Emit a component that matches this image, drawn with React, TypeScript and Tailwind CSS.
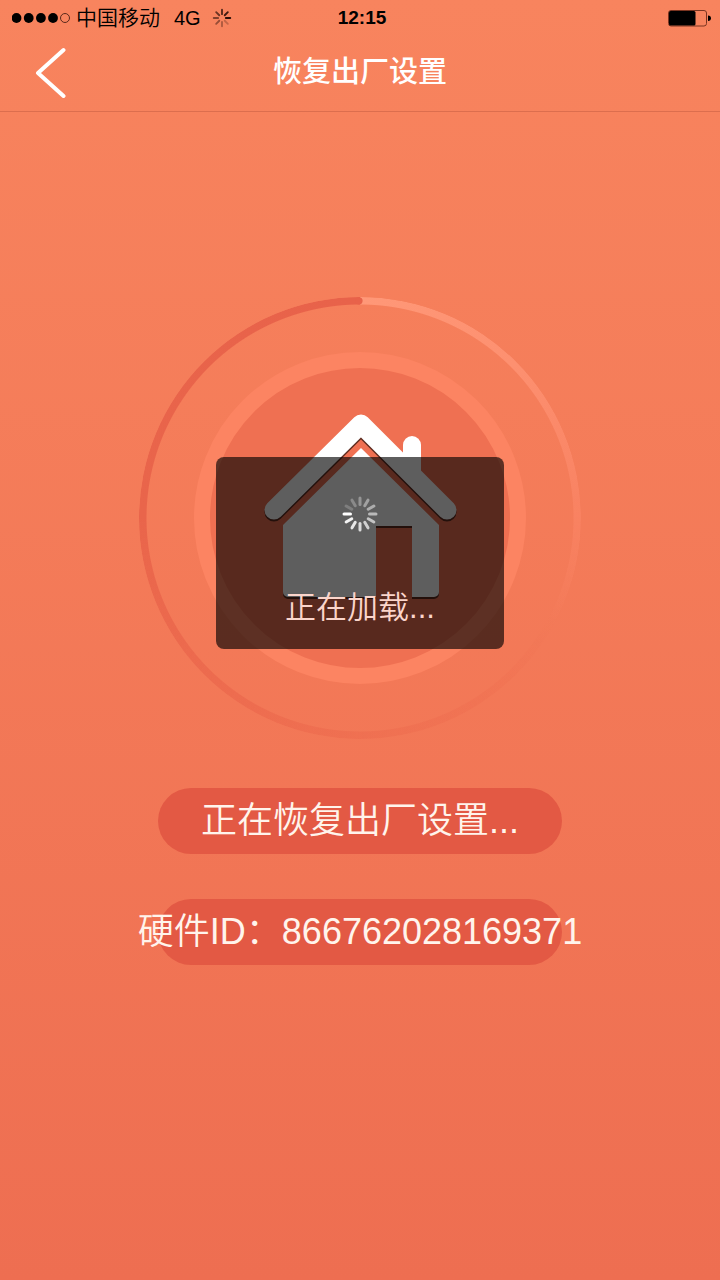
type SpinnerProps = {
  className: string;
  spokes: number;
  start: number;
  direction: 1 | -1;
  inner: number;
  outer: number;
  width: number;
  fade: number;
};

function Spinner({ className, spokes, start, direction, inner, outer, width, fade }: SpinnerProps) {
  const step = 360 / spokes;
  return (
    <svg viewBox="-20 -20 40 40" className={className} aria-hidden="true">
      {Array.from({ length: spokes }, (_, i) => (
        <line
          key={i}
          x1={0}
          y1={-inner}
          x2={0}
          y2={-outer}
          stroke="currentColor"
          strokeWidth={width}
          strokeLinecap="round"
          opacity={1 - (i / (spokes - 1)) * fade}
          transform={`rotate(${start + direction * i * step})`}
        />
      ))}
    </svg>
  );
}

function StatusBar() {
  return (
    <div className="grid h-9 grid-cols-3 items-center pl-3 pr-2 text-black">
      <div className="flex items-center whitespace-nowrap text-xl">
        <svg viewBox="0 0 58 12" className="mr-1.5 h-3 w-[58px]" aria-hidden="true">
          <circle cx="4.5" cy="6" r="4.9" />
          <circle cx="16.7" cy="6" r="4.9" />
          <circle cx="28.9" cy="6" r="4.9" />
          <circle cx="41" cy="6" r="4.9" />
          <circle cx="53" cy="6" r="4.5" fill="none" stroke="#5a2a1c" strokeWidth="1" />
        </svg>
        <span className="mr-3.5 text-[21px] font-[350]">中国移动</span>
        <span>4G</span>
        <Spinner
          className="ml-2.5 size-[22px] text-[#2a0f08]"
          spokes={8}
          start={90}
          direction={-1}
          inner={7}
          outer={15}
          width={3.4}
          fade={0.75}
        />
      </div>
      <span className="text-center text-[19px] font-bold">12:15</span>
      <svg viewBox="0 0 44 18" className="h-[18px] w-11 justify-self-end" aria-hidden="true">
        <rect x="0.5" y="1.5" width="38" height="15.5" rx="2.5" fill="none" stroke="#7a3420" />
        <rect x="1" y="2" width="26.5" height="14.5" rx="1.5" />
        <path d="M40 6.5c2 0 3 1.2 3 2.8s-1 2.8-3 2.8z" />
      </svg>
    </div>
  );
}

function NavBar() {
  return (
    <div className="grid h-[76px] grid-cols-[96px_1fr_96px] items-center border-b border-[#dc6e4e] pb-1">
      <button type="button" aria-label="返回" className="ml-8 size-[52px] text-white">
        <svg viewBox="0 0 52 52" className="size-full" fill="none" stroke="currentColor" strokeWidth="4">
          <path d="M31.5 4L6 27L31.5 50" strokeLinecap="round" strokeLinejoin="round" />
        </svg>
      </button>
      <h1 className="text-center text-[29px] font-medium leading-9 text-white">恢复出厂设置</h1>
    </div>
  );
}

function House() {
  const roof = "M135 213L222 127L308 213";
  const body =
    "M222 151L300 228V295a5 5 0 0 1-5 5H273V229H237V300H149a5 5 0 0 1-5-5V228z";
  return (
    <svg viewBox="0 0 442 442" className="absolute inset-0 size-full" aria-hidden="true">
      <circle cx="221" cy="221" r="158" fill="#ef7052" stroke="#fc8462" strokeWidth="16" />
      <circle cx="220" cy="3.8" r="3.6" fill="#e8624a" />
      <g opacity="0.6" transform="translate(0 2)">
        <path d={roof} fill="none" stroke="#000" strokeWidth="19" strokeLinecap="round" strokeLinejoin="round" />
        <path d="M144 290V295a5 5 0 0 0 5 5H237V290zM273 290V300H295a5 5 0 0 0 5-5V290zM237 220V229H273V220z" />
      </g>
      <path d="M264 170V148a9 9 0 0 1 18 0V187z" fill="#fff" />
      <path d={roof} fill="none" stroke="#fff" strokeWidth="19" strokeLinecap="round" strokeLinejoin="round" />
      <path d={body} fill="#fff" />
    </svg>
  );
}

function ResetProgress() {
  return (
    <div className="relative size-[442px]">
      <div className="absolute inset-0 rounded-full bg-[conic-gradient(#ff9878_0deg,#fd9070_45deg,#f98363_85deg,transparent_120deg,#ee6b4e40_140deg,#ec694d90_190deg,#e9654b_270deg,#e8624a_360deg)] [mask-image:radial-gradient(closest-side,transparent_213px,black_214px)]" />
      <House />
      <div
        role="status"
        className="absolute left-1/2 top-40 flex h-48 w-72 -translate-x-1/2 flex-col items-center rounded-lg bg-black/63 pt-[37px]"
      >
        <Spinner
          className="size-10 text-white"
          spokes={12}
          start={270}
          direction={-1}
          inner={9.5}
          outer={16}
          width={3}
          fade={0.8}
        />
        <p className="mt-[50px] whitespace-nowrap text-[31px] font-[350] leading-[48px] text-[#fbd5cb]">正在加载...</p>
      </div>
    </div>
  );
}

function Pill({ children }: { children: string }) {
  return (
    <p className="flex h-[66px] w-[404px] items-center justify-center whitespace-nowrap rounded-full bg-[#e35944] text-4xl font-[350] text-[#fff4ec]">
      {children}
    </p>
  );
}

export default function App() {
  return (
    <div className="flex min-h-screen flex-col bg-linear-to-b from-[#f8845e] to-[#ee6e51] font-['Liberation_Sans','Noto_Sans_CJK_SC',sans-serif]">
      <header>
        <StatusBar />
        <NavBar />
      </header>
      <main className="flex flex-col items-center pt-[185px]">
        <ResetProgress />
        <div className="mt-[49px] flex flex-col gap-[45px]">
          <Pill>正在恢复出厂设置...</Pill>
          <Pill>硬件ID：866762028169371</Pill>
        </div>
      </main>
    </div>
  );
}
